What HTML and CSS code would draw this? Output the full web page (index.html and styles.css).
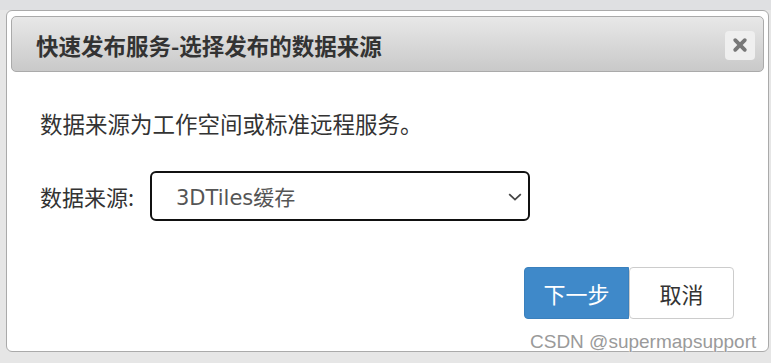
FILE: index.html
```html
<!DOCTYPE html>
<html lang="zh-CN">
<head>
<meta charset="utf-8">
<title>快速发布服务</title>
<link rel="stylesheet" href="styles.css">
</head>
<body>
<div class="backdrop">
  <div class="dialog">
    <div class="titlebar">
      <h3 class="title">快速发布服务-选择发布的数据来源</h3>
      <button class="close" type="button" aria-label="关闭">
        <svg width="16" height="16" viewBox="0 0 16 16"><path d="M3.2 3.2 L12.8 12.8 M12.8 3.2 L3.2 12.8" stroke="#777" stroke-width="3.8" stroke-linecap="round"/></svg>
      </button>
    </div>
    <div class="content">
      <p class="intro">数据来源为工作空间或标准远程服务。</p>
      <div class="form-row">
        <label class="label">数据来源:</label>
        <div class="select">
          <span class="select-value">3DTiles缓存</span>
          <svg class="chevron" width="14" height="8" viewBox="0 0 14 8"><path d="M1.2 1.2 L7 6.6 L12.8 1.2" fill="none" stroke="#444" stroke-width="1.8"/></svg>
        </div>
      </div>
      <div class="actions">
        <button class="btn btn-primary" type="button">下一步</button>
        <button class="btn btn-default" type="button">取消</button>
      </div>
    </div>
    <div class="watermark">CSDN @supermapsupport</div>
  </div>
</div>
</body>
</html>
```

FILE: styles.css
```css
html, body {
  margin: 0;
  padding: 0;
}
body {
  width: 771px;
  height: 363px;
  overflow: hidden;
  background: #dedede;
  font-family: "Noto Sans CJK SC", "Noto Sans", sans-serif;
  color: #333;
}
.backdrop {
  padding: 10px 2px 0 6px;
  background: linear-gradient(#dfe0e2 0, #dfe0e2 10px, #e6e6e6 10px, #e6e6e6 100%);
  height: 363px;
  box-sizing: border-box;
}
.dialog {
  position: relative;
  width: 763px;
  height: 342px;
  box-sizing: border-box;
  border: 1px solid #aaa;
  border-radius: 6px;
  background: #fff;
  padding: 5px 4px 0 4px;
}
.titlebar {
  height: 56px;
  box-sizing: border-box;
  border: 1px solid #aaa;
  border-radius: 5px;
  background: linear-gradient(#e8e8e8, #c9c9c9);
  display: flex;
  align-items: center;
  justify-content: space-between;
  padding: 0 8px 0 24px;
}
.title {
  margin: 0;
  font-size: 22.5px;
  font-weight: bold;
  color: #333;
  line-height: 30px;
  padding-top: 2px;
}
.close {
  width: 30px;
  height: 29px;
  border: 0;
  border-radius: 4px;
  background: #efefef;
  display: flex;
  align-items: center;
  justify-content: center;
  padding: 0;
  margin-top: 2px;
}
.content {
  padding: 0 0 0 29px;
}
.intro {
  margin: 36px 0 0 0;
  font-size: 22.5px;
  line-height: 30px;
  color: #333;
}
.form-row {
  display: flex;
  align-items: center;
  margin-top: 33px;
  height: 50px;
}
.label {
  width: 110px;
  font-size: 22px;
  color: #333;
}
.select {
  width: 380px;
  height: 50px;
  box-sizing: border-box;
  border: 2px solid #111;
  border-radius: 6px;
  display: flex;
  align-items: center;
  justify-content: space-between;
  padding: 0 6px 0 24px;
}
.select-value {
  font-family: "DejaVu Sans", "Noto Sans CJK SC", sans-serif;
  font-size: 21px;
  color: #555;
}
.chevron {
  margin-top: 2px;
}
.actions {
  display: flex;
  justify-content: flex-end;
  margin-top: 46px;
  padding-right: 30px;
}
.btn {
  width: 105px;
  height: 52px;
  box-sizing: border-box;
  font-family: "Noto Sans CJK SC", sans-serif;
  font-size: 22px;
  padding: 0;
  border-radius: 4px;
}
.btn-primary {
  background: #3f89c9;
  border: 1px solid #3a80bd;
  color: #fff;
  border-radius: 4px 0 0 4px;
}
.btn-default {
  background: #fff;
  border: 1px solid #ccc;
  color: #333;
}
.watermark {
  position: absolute;
  left: 523px;
  top: 320px;
  font-family: "Liberation Sans", Arial, sans-serif;
  font-size: 19px;
  color: #9a9a9a;
  text-shadow: 0 0 2px #fff, 0 0 1px #fff;
  white-space: nowrap;
  line-height: 22px;
}
```
